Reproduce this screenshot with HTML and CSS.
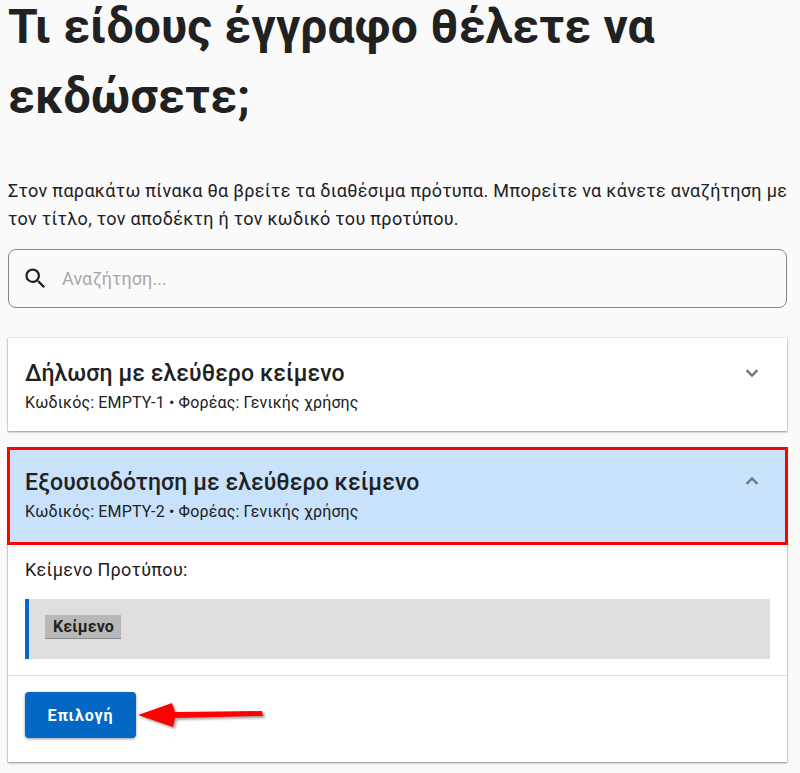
FILE: index.html
```html
<!DOCTYPE html>
<html lang="el">
<head>
<meta charset="utf-8">
<title>Πρότυπα</title>
<link rel="stylesheet" href="styles.css">
</head>
<body>
<main class="page">
  <h1 class="title">Τι είδους έγγραφο θέλετε να εκδώσετε;</h1>
  <p class="intro">Στον παρακάτω πίνακα θα βρείτε τα διαθέσιμα πρότυπα. Μπορείτε να κάνετε αναζήτηση με τον τίτλο, τον αποδέκτη ή τον κωδικό του προτύπου.</p>
  <div class="search">
    <svg class="search-icon" viewBox="0 0 24 24" width="27" height="27"><path d="M15.5 14h-.79l-.28-.27A6.47 6.47 0 0 0 16 9.5 6.5 6.5 0 1 0 9.5 16c1.61 0 3.09-.59 4.23-1.57l.27.28v.79l5 4.99L20.49 19l-4.99-5zm-6 0C7.01 14 5 11.99 5 9.5S7.01 5 9.5 5 14 7.01 14 9.5 11.99 14 9.5 14z"/></svg>
    <span class="placeholder">Αναζήτηση...</span>
  </div>
  <section class="card">
    <header class="card-head">
      <div>
        <h2 class="card-title">Δήλωση με ελεύθερο κείμενο</h2>
        <p class="card-meta">Κωδικός: EMPTY-1 • Φορέας: Γενικής χρήσης</p>
      </div>
      <svg class="chevron" viewBox="0 0 24 24" width="24" height="24"><path d="M16.59 8.59 12 13.17 7.41 8.59 6 10l6 6 6-6z"/></svg>
    </header>
  </section>
  <section class="card card-open">
    <header class="card-head card-head-open">
      <div>
        <h2 class="card-title">Εξουσιοδότηση με ελεύθερο κείμενο</h2>
        <p class="card-meta">Κωδικός: EMPTY-2 • Φορέας: Γενικής χρήσης</p>
      </div>
      <svg class="chevron" viewBox="0 0 24 24" width="24" height="24"><path d="M12 8l-6 6 1.41 1.41L12 10.83l4.59 4.58L18 14z"/></svg>
    </header>
    <div class="card-body">
      <p class="body-label">Κείμενο Προτύπου:</p>
      <div class="quote"><span class="chip">Κείμενο</span></div>
    </div>
    <footer class="card-foot">
      <button class="btn" type="button">Επιλογή</button>
      <svg class="arrow" viewBox="0 0 130 40" width="130" height="40"><path class="arrow-fill" d="M1 20 35 8l3 9 87-1 1 5-88 2-2 9z"/></svg>
    </footer>
  </section>
</main>
</body>
</html>
```
FILE: styles.css
```css
* { box-sizing: border-box; }
html, body { margin: 0; padding: 0; }
body {
  background: #fafafa;
  color: #212121;
  font-family: Roboto, "Noto Sans", sans-serif;
  height: 773px;
  overflow: hidden;
}
.page { padding: 0 13px 0 8px; }
.title {
  margin: -8px 0 0;
  font-size: 48px;
  line-height: 70px;
  font-weight: 700;
  letter-spacing: 0.2px;
}
.intro {
  margin: 45px -6px 0 0;
  font-size: 18px;
  line-height: 28px;
  letter-spacing: 0.31px;
}
.search {
  margin-top: 16px;
  height: 59px;
  border: 1px solid #858585;
  border-radius: 8px;
  display: flex;
  align-items: center;
  padding-left: 13px;
  gap: 13px;
}
.search-icon { fill: #212121; flex: none; }
.placeholder { font-size: 18px; color: #a8a8a8; letter-spacing: 0.1px; }
.card {
  margin-top: 30px;
  background: #fff;
  box-shadow: 0 1px 2px rgba(0,0,0,.4), 0 0 1px rgba(0,0,0,.3);
}
.card-open { margin-top: 17px; }
.card-head {
  height: 93px;
  padding: 21px 23px 0 17px;
  display: flex;
  align-items: flex-start;
  justify-content: space-between;
}
.card-head-open {
  height: 96px;
  padding-top: 20px;
  background: #c8e2fc;
  outline: 3px solid #f00;
  outline-offset: -2px;
  position: relative;
}
.card-title { margin: 0; font-size: 23px; line-height: 30px; font-weight: 500; letter-spacing: 0.1px; }
.card-meta { margin: 4px 0 0; font-size: 16px; line-height: 20px; letter-spacing: 0.15px; }
.chevron { fill: #757575; stroke: #757575; stroke-width: 0.5; flex: none; margin-top: 2px; }
.card-head-open .chevron { margin-top: 1px; }
.card-body { padding: 14px 17px 16px; border-bottom: 1px solid #e0e0e0; }
.body-label { margin: 0; font-size: 18px; line-height: 24px; letter-spacing: 0.3px; }
.quote {
  margin-top: 17px;
  height: 60px;
  padding-bottom: 4px;
  background: #dfdfdf;
  border-left: 4px solid #0368c4;
  padding-left: 16px;
  display: flex;
  align-items: center;
}
.chip {
  background: #b8b8b8;
  border-bottom: 1px solid #8f8f8f;
  font-size: 16px;
  font-weight: 700;
  padding: 0 7px 0 8px;
  line-height: 23px;
  letter-spacing: 0.1px;
}
.card-foot {
  padding: 16px 17px 24px;
  display: flex;
  align-items: center;
  gap: 1px;
}
.btn {
  width: 111px;
  height: 46px;
  border: 0;
  border-radius: 4px;
  background: #0368c4;
  color: #fff;
  font: 700 16px Roboto, sans-serif;
  letter-spacing: 0.9px;
  box-shadow: 0 1px 3px rgba(0,0,0,.4);
}
.arrow { flex: none; filter: drop-shadow(2px 2px 1px rgba(0,0,0,.35)); }
.arrow-fill { fill: #f00; }
```
